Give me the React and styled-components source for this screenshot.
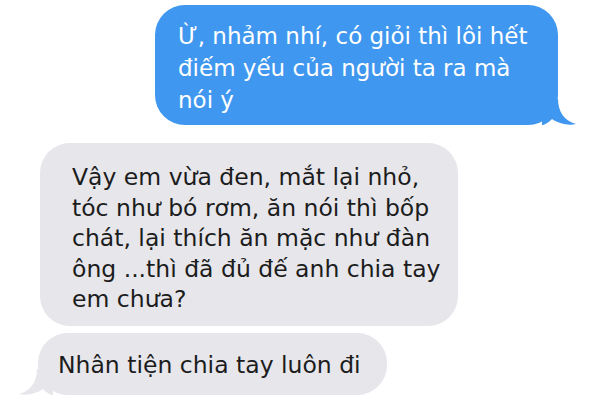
import React from "react";
import styled, { createGlobalStyle } from "styled-components";

const GlobalStyle = createGlobalStyle`
  html, body {
    margin: 0;
    padding: 0;
    background: #ffffff;
  }
  body {
    font-family: "DejaVu Sans", Verdana, sans-serif;
  }
`;

const Thread = styled.div`
  width: 600px;
  height: 400px;
  overflow: hidden;
  display: flex;
  flex-direction: column;
  padding-top: 5px;
  box-sizing: border-box;
`;

const Bubble = styled.div`
  position: relative;
  box-sizing: border-box;
  width: ${(p) => p.$width}px;
  height: ${(p) => p.$height}px;
  margin-left: ${(p) => p.$left}px;
  margin-top: ${(p) => p.$gap || 0}px;
  padding: ${(p) => p.$pad};
  border-radius: 30px;
  background: ${(p) => (p.$sent ? "#3f97ef" : "#e6e6eb")};
  color: ${(p) => (p.$sent ? "#ffffff" : "#1c1c1c")};
  font-size: ${(p) => p.$size}px;
  line-height: ${(p) => p.$lh}px;
  white-space: nowrap;
`;

const Tail = styled.svg`
  position: absolute;
  bottom: 0;
  ${(p) => (p.$side === "right" ? "right: -18px;" : "left: -19px;")}
  width: 34px;
  height: 26px;
`;

export default function App() {
  return (
    <Thread>
      <GlobalStyle />
      <Bubble $sent $left={155} $width={403} $height={120} $pad="15px 16px 0 23px" $lh={32} $size={23}>
        Ừ, nhảm nhí, có giỏi thì lôi hết
        <br />
        điếm yếu của người ta ra mà
        <br />
        nói ý
        <Tail $side="right" viewBox="0 0 34 26">
          <path d="M0 0 L16 0 C16 12 22 22 34 25 C26 27 16 24 10 20 C6 24 2 26 0 26 Z" fill="#3f97ef" />
        </Tail>
      </Bubble>
      <Bubble $left={40} $width={418} $height={183} $gap={18} $pad="19px 10px 0 32px" $lh={30.5} $size={23.5}>
        Vậy em vừa đen, mắt lại nhỏ,
        <br />
        tóc như bó rơm, ăn nói thì bốp
        <br />
        chát, lại thích ăn mặc như đàn
        <br />
        ông ...thì đã đủ đế anh chia tay
        <br />
        em chưa?
      </Bubble>
      <Bubble $left={38} $width={349} $height={62} $gap={7} $pad="17px 10px 0 20px" $lh={30} $size={23.5}>
        Nhân tiện chia tay luôn đi
        <Tail $side="left" viewBox="0 0 34 26">
          <path d="M34 0 L18 0 C18 12 12 22 0 25 C8 27 18 24 24 20 C28 24 32 26 34 26 Z" fill="#e6e6eb" />
        </Tail>
      </Bubble>
    </Thread>
  );
}
